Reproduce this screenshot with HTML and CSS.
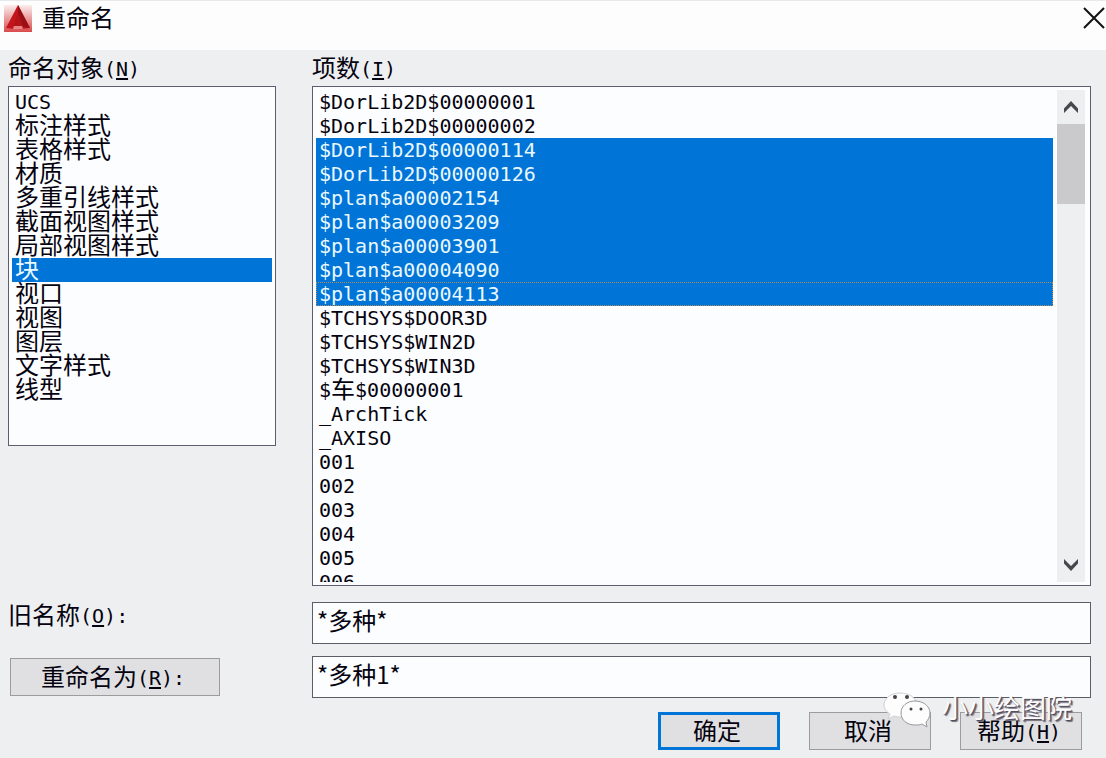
FILE: index.html
```
<!DOCTYPE html>
<html lang="zh-CN">
<head>
<meta charset="utf-8">
<title>重命名</title>
<link rel="stylesheet" href="styles.css">
</head>
<body>
<div class="dialog">
  <header class="titlebar">
    <svg class="app-icon" width="28" height="28" viewBox="0 0 28 28" aria-hidden="true">
      <defs><linearGradient id="tile" x1="0" y1="0" x2="0" y2="1"><stop offset="0" stop-color="#fbeeee"/><stop offset="1" stop-color="#d94a4c"/></linearGradient></defs>
      <path fill="url(#tile)" d="M0 0h28v27H0z"/>
      <path fill="#c3161c" d="M14 0 2 23l8 1h8l8-1z"/>
      <path fill="#9a0f14" d="m14 0 12 23-7-1-5-12z"/>
      <path fill="#b3141a" d="m14 8 5 13H9z"/>
      <path fill="#e78584" d="M10 21h8l1 3H9z"/>
    </svg>
    <h1 class="title">重命名</h1>
    <button class="close" type="button" aria-label="关闭">
      <svg width="22" height="22" viewBox="0 0 22 22"><path d="M1 1l20 20M21 1 1 21" stroke="#111" stroke-width="2" fill="none"/></svg>
    </button>
  </header>

  <form class="content">
    <span class="caption" id="objects-label">命名对象<span class="latin">(<u>N</u>)</span></span>
    <span class="caption" id="items-label">项数<span class="latin">(<u>I</u>)</span></span>

    <ul class="listbox objects" role="listbox" tabindex="0" aria-labelledby="objects-label">
      <li role="option"><span class="latin">UCS</span></li>
      <li role="option">标注样式</li>
      <li role="option">表格样式</li>
      <li role="option">材质</li>
      <li role="option">多重引线样式</li>
      <li role="option">截面视图样式</li>
      <li role="option">局部视图样式</li>
      <li role="option" aria-selected="true">块</li>
      <li role="option">视口</li>
      <li role="option">视图</li>
      <li role="option">图层</li>
      <li role="option">文字样式</li>
      <li role="option">线型</li>
    </ul>

    <div class="listbox items">
      <ul class="rows" role="listbox" aria-multiselectable="true" tabindex="0" aria-labelledby="items-label">
        <li role="option"><span class="latin">$DorLib2D$00000001</span></li>
        <li role="option"><span class="latin">$DorLib2D$00000002</span></li>
        <li role="option" aria-selected="true"><span class="latin">$DorLib2D$00000114</span></li>
        <li role="option" aria-selected="true"><span class="latin">$DorLib2D$00000126</span></li>
        <li role="option" aria-selected="true"><span class="latin">$plan$a00002154</span></li>
        <li role="option" aria-selected="true"><span class="latin">$plan$a00003209</span></li>
        <li role="option" aria-selected="true"><span class="latin">$plan$a00003901</span></li>
        <li role="option" aria-selected="true"><span class="latin">$plan$a00004090</span></li>
        <li role="option" aria-selected="true" class="current"><span class="latin">$plan$a00004113</span></li>
        <li role="option"><span class="latin">$TCHSYS$DOOR3D</span></li>
        <li role="option"><span class="latin">$TCHSYS$WIN2D</span></li>
        <li role="option"><span class="latin">$TCHSYS$WIN3D</span></li>
        <li role="option"><span class="latin">$</span>车<span class="latin">$00000001</span></li>
        <li role="option"><span class="latin">_ArchTick</span></li>
        <li role="option"><span class="latin">_AXISO</span></li>
        <li role="option"><span class="latin">001</span></li>
        <li role="option"><span class="latin">002</span></li>
        <li role="option"><span class="latin">003</span></li>
        <li role="option"><span class="latin">004</span></li>
        <li role="option"><span class="latin">005</span></li>
        <li role="option"><span class="latin">006</span></li>
      </ul>
      <div class="scrollbar">
        <button class="arrow" type="button" aria-label="向上滚动"><svg width="16" height="14" viewBox="0 0 16 14"><path d="M1 8.500 8 1l7 7.500V13L8 6l-7 7z" fill="#47474c"/></svg></button>
        <div class="thumb"></div>
        <button class="arrow" type="button" aria-label="向下滚动"><svg width="16" height="14" viewBox="0 0 16 14"><path d="M1 5.500 8 13l7-7.500V1L8 8 1 1z" fill="#47474c"/></svg></button>
      </div>
    </div>

    <label class="old-label" for="old-name">旧名称<span class="latin">(<u>O</u>):</span></label>
    <input class="field" id="old-name" type="text" value="*多种*">
    <button class="button rename" type="button">重命名为<span class="latin">(<u>R</u>):</span></button>
    <input class="field" type="text" aria-label="重命名为" value="*多种1*">

    <div class="actions">
      <button class="button primary" type="submit">确定</button>
      <button class="button" type="button">取消</button>
      <button class="button" type="button">帮助<span class="latin">(<u>H</u>)</span></button>
    </div>
  </form>

  <div class="watermark">
    <svg width="48" height="38" viewBox="0 0 48 38" aria-hidden="true">
      <path d="M17 2C7 2 1 8 1 14c0 4 3 7 6 9l-2 5 6-3c3 1 5 1 8 1 8 0 15-5 15-12S26 2 17 2z" fill="#fdfdfe" stroke="#d0d0d3" stroke-width="1"/>
      <path d="M32 10c-8 0-14 5-14 12s6 12 14 12c3 0 5 0 7-1l5 3-1-5c2-2 4-5 4-9 0-7-7-12-15-12z" fill="#fdfdfe" stroke="#98989c"/>
      <g fill="#444"><circle cx="12" cy="6" r="2"/><circle cx="24" cy="6" r="2"/><circle cx="28" cy="18" r="1.500"/><circle cx="38" cy="18" r="1.500"/></g>
    </svg>
    <span>小小绘图院</span>
  </div>
</div>
</body>
</html>
```
FILE: styles.css
```
* { box-sizing: border-box; }

body {
  margin: 0;
  background: #eeeff1;
  color: #05030f;
  font: 24px/24px "Noto Sans CJK SC", sans-serif;
}

.dialog { position: relative; min-height: 100vh; }

.latin {
  font-family: "DejaVu Sans Mono", monospace;
  font-size: 20px;
  line-height: 16px;
  vertical-align: 1px;
}

u { text-decoration-thickness: 2px; text-underline-offset: 2px; }

.titlebar {
  display: flex;
  align-items: flex-start;
  height: 50px;
  padding: 4px 0 0 4px;
  background: #fdfdfe;
  border-top: 1px solid #e6e8ea;
}

.title { flex: 1; margin: 0 0 0 10px; font-size: 24px; font-weight: 400; line-height: 24px; }

.close { margin-top: 2px; padding: 0 1px 0 0; border: 0; background: none; line-height: 0; }

.content {
  display: grid;
  grid-template-columns: 268px 1fr;
  column-gap: 36px;
  padding: 0 15px 9px 8px;
}

.caption { height: 36px; padding-top: 5px; }

.listbox {
  margin: 0;
  padding: 3px;
  border: 1px solid #5c5d70;
  background: #fcfdfe;
  list-style: none;
}

.listbox li { height: 24px; padding-left: 3px; line-height: 20px; white-space: nowrap; }

.listbox [aria-selected="true"] { background: #0074d7; color: #eaf8ff; }

.listbox .current { outline: 1px dotted #b08a58; outline-offset: -1px; }

.objects { height: 360px; }

.items { display: flex; gap: 4px; height: 500px; padding-right: 5px; }

.rows { flex: 1; margin: 0; padding: 0; overflow: hidden; list-style: none; }

.scrollbar { display: flex; flex-direction: column; width: 28px; background: #eeeff1; }

.arrow { height: 34px; padding: 0; border: 0; background: none; line-height: 0; }

.thumb { height: 80px; margin-bottom: auto; background: #cacacc; }

.old-label { margin-top: 16px; }

.field {
  width: 100%;
  height: 42px;
  margin-top: 16px;
  padding: 0 4px 8px;
  border: 1px solid #5c5d66;
  background: #fcfdfe;
  color: inherit;
  font: 24px/24px "Noto Sans CJK SC", sans-serif;
}

.rename + .field { margin-top: 12px; }

.button {
  width: 122px;
  height: 38px;
  padding: 0 4px 3px 0;
  border: 1px solid #9c9c9f;
  background: #e0e0e2;
  color: inherit;
  font: 24px/24px "Noto Sans CJK SC", sans-serif;
}

.rename { width: 210px; margin: 14px 0 0 2px; }

.primary { border: 3px solid #0074d7; }

.actions {
  grid-column: 1 / -1;
  display: flex;
  justify-content: flex-end;
  gap: 29px;
  margin: 14px 9px 0 0;
}

.watermark {
  position: absolute;
  right: 34px;
  bottom: 30px;
  display: flex;
  align-items: flex-start;
  gap: 11px;
  color: #fdfdfe;
  font-size: 26px;
  line-height: 32px;
  text-shadow: 1px 1px 1px #4c4858, 2px 2px 1px #77727f;
  pointer-events: none;
}
```
